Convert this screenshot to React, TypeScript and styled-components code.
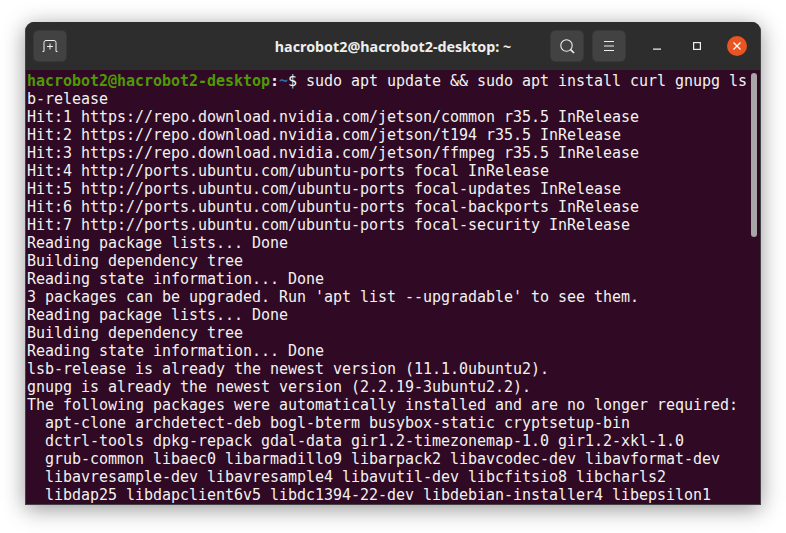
import React from 'react'
import styled, { createGlobalStyle } from 'styled-components'

const GlobalStyle = createGlobalStyle`
  html, body {
    background: #fff;
    height: 533px;
    margin: 0;
    overflow: hidden;
    width: 786px;
  }
`

const Page = styled.div`
  box-sizing: border-box;
  height: 533px;
  padding: 22px 25px 28px;
  width: 786px;
`

const Window = styled.div`
  background: #300a24;
  border: solid #454245;
  border-radius: 9px 9px 0 0;
  border-width: 0 1px 1px;
  box-shadow: 0 4px 22px rgb(0 0 0 / 42%);
  box-sizing: border-box;
  display: flex;
  flex-direction: column;
  height: 483px;
  overflow: hidden;
  position: relative;
  width: 736px;
`

const HeaderBar = styled.header`
  align-items: center;
  background: #2d2d2d;
  box-sizing: border-box;
  display: grid;
  flex: none;
  grid-template-columns: 1fr auto 1fr;
  height: 48px;
  padding: 0 7px;
`

const HeaderSide = styled.div<{ $end?: boolean }>`
  align-items: center;
  display: flex;
  gap: 8px;
  justify-content: ${({ $end }) => ($end ? 'flex-end' : 'flex-start')};
`

const Title = styled.div`
  color: #eeeeec;
  font-family: 'Noto Sans', sans-serif;
  font-size: 14.3px;
  font-weight: 700;
  white-space: nowrap;
`

const HeaderButton = styled.div`
  align-items: center;
  background: #424242;
  border: 1px solid #383838;
  border-radius: 5px;
  box-sizing: border-box;
  display: flex;
  height: 32px;
  justify-content: center;
  width: 34px;

  svg {
    display: block;
  }
`

const WindowControls = styled.div`
  align-items: center;
  display: flex;
  gap: 16px;
  margin: 0 6px 0 11px;
`

const WindowControl = styled.div`
  align-items: center;
  display: flex;
  height: 24px;
  justify-content: center;
  width: 24px;

  svg {
    display: block;
  }
`

const CloseControl = styled(WindowControl)`
  background: #e95420;
  border-radius: 50%;
  height: 20px;
  margin-left: 2px;
  width: 20px;
`

const Terminal = styled.pre`
  color: #f2f2f0;
  flex: 1;
  font-family: 'DejaVu Sans Mono', monospace;
  font-size: 15px;
  letter-spacing: -0.03px;
  line-height: 18px;
  margin: 0;
  overflow: hidden;
  padding: 2px 0 0 1px;
`

const PromptUser = styled.span`
  color: #4e9a06;
  font-weight: 700;
`

const PromptPath = styled.span`
  color: #3465a4;
  font-weight: 700;
`

const PromptColon = styled.span`
  font-weight: 700;
`

const Scrollbar = styled.div`
  background: #a9a4a7;
  border-radius: 3px;
  height: 164px;
  position: absolute;
  right: 3px;
  top: 51px;
  width: 6px;
`

const outputLines = [
  'b-release',
  'Hit:1 https://repo.download.nvidia.com/jetson/common r35.5 InRelease',
  'Hit:2 https://repo.download.nvidia.com/jetson/t194 r35.5 InRelease',
  'Hit:3 https://repo.download.nvidia.com/jetson/ffmpeg r35.5 InRelease',
  'Hit:4 http://ports.ubuntu.com/ubuntu-ports focal InRelease',
  'Hit:5 http://ports.ubuntu.com/ubuntu-ports focal-updates InRelease',
  'Hit:6 http://ports.ubuntu.com/ubuntu-ports focal-backports InRelease',
  'Hit:7 http://ports.ubuntu.com/ubuntu-ports focal-security InRelease',
  'Reading package lists... Done',
  'Building dependency tree',
  'Reading state information... Done',
  "3 packages can be upgraded. Run 'apt list --upgradable' to see them.",
  'Reading package lists... Done',
  'Building dependency tree',
  'Reading state information... Done',
  'lsb-release is already the newest version (11.1.0ubuntu2).',
  'gnupg is already the newest version (2.2.19-3ubuntu2.2).',
  'The following packages were automatically installed and are no longer required:',
  '  apt-clone archdetect-deb bogl-bterm busybox-static cryptsetup-bin',
  '  dctrl-tools dpkg-repack gdal-data gir1.2-timezonemap-1.0 gir1.2-xkl-1.0',
  '  grub-common libaec0 libarmadillo9 libarpack2 libavcodec-dev libavformat-dev',
  '  libavresample-dev libavresample4 libavutil-dev libcfitsio8 libcharls2',
  '  libdap25 libdapclient6v5 libdc1394-22-dev libdebian-installer4 libepsilon1',
]

const App = () => (
  <Page>
    <GlobalStyle />
    <Window>
      <HeaderBar>
        <HeaderSide>
          <HeaderButton>
            <svg width="16" height="12" viewBox="0 0 16 12" fill="none" stroke="#eeeeec" strokeWidth="1">
              <path d="M0.5 11.5h1.5V2.5q0-2 2-2h8q2 0 2 2v9h1.5" />
              <path d="M8 3.5v6M5 6.5h6" />
            </svg>
          </HeaderButton>
        </HeaderSide>
        <Title>hacrobot2@hacrobot2-desktop: ~</Title>
        <HeaderSide $end>
          <HeaderButton>
            <svg width="15" height="15" viewBox="0 0 15 15" fill="none" stroke="#eeeeec" strokeWidth="1.1">
              <circle cx="6.5" cy="6.5" r="5.7" />
              <path d="M10.6 10.6l3.4 3.4" strokeWidth="1.7" />
            </svg>
          </HeaderButton>
          <HeaderButton>
            <svg width="10" height="10" viewBox="0 0 10 10" fill="none" stroke="#eeeeec" strokeWidth="1">
              <path d="M0 0.5h10M0 5h10M0 9.5h10" />
            </svg>
          </HeaderButton>
          <WindowControls>
            <WindowControl>
              <svg width="8" height="8" viewBox="0 0 8 8" fill="none" stroke="#eeeeec" strokeWidth="1.2">
                <path d="M0 7.2h8" />
              </svg>
            </WindowControl>
            <WindowControl>
              <svg width="8" height="8" viewBox="0 0 8 8" fill="none" stroke="#eeeeec" strokeWidth="1.2">
                <rect x="0.6" y="0.6" width="6.8" height="6.8" />
              </svg>
            </WindowControl>
            <CloseControl>
              <svg width="8" height="8" viewBox="0 0 8 8" fill="none" stroke="#ffffff" strokeWidth="1.3">
                <path d="M0.5 0.5l7 7M7.5 0.5l-7 7" />
              </svg>
            </CloseControl>
          </WindowControls>
        </HeaderSide>
      </HeaderBar>
      <Terminal>
        <PromptUser>hacrobot2@hacrobot2-desktop</PromptUser>
        <PromptColon>:</PromptColon>
        <PromptPath>~</PromptPath>$ sudo apt update &amp;&amp; sudo apt install curl gnupg ls
        {'\n'}
        {outputLines.join('\n')}
      </Terminal>
      <Scrollbar />
    </Window>
  </Page>
)

export default App
